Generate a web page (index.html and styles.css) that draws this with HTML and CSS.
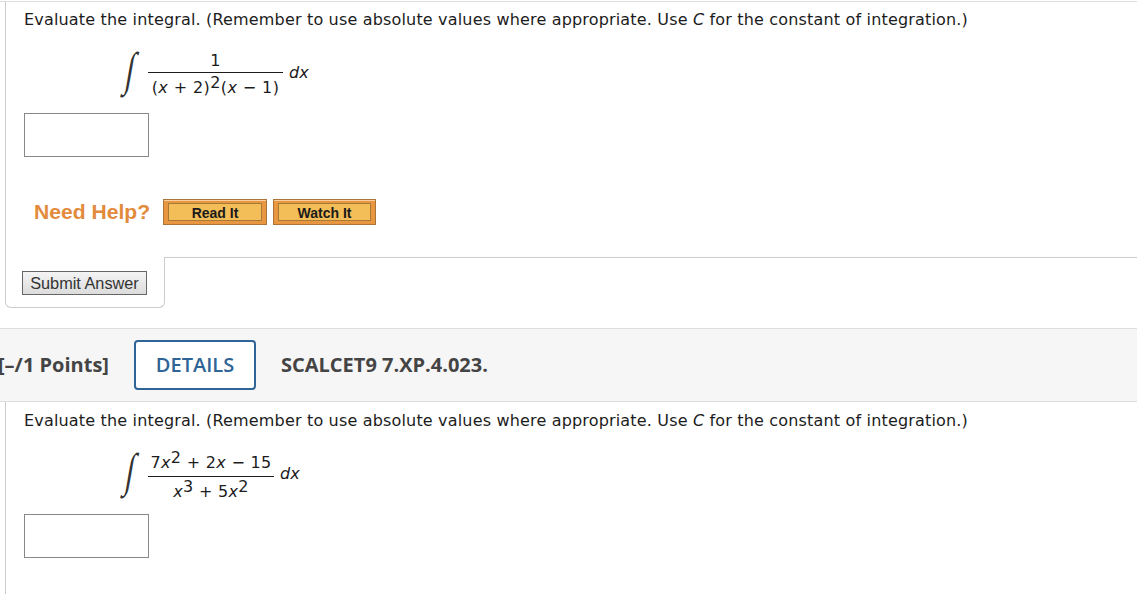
FILE: index.html
```html
<!DOCTYPE html>
<html lang="en">
<head>
<meta charset="utf-8">
<title>Integral questions</title>
<link rel="stylesheet" href="styles.css">
</head>
<body>
<section class="first">
  <div class="first-top">
    <p class="prompt">Evaluate the integral. (Remember to use absolute values where appropriate. Use <i>C</i> for the constant of integration.)</p>
    <div class="math">
      <span class="integral"><span class="integral-glyph">∫</span></span>
      <span class="frac frac-a">
        <span class="num">1</span>
        <span class="den">(<i>x</i> + 2)<sup>2</sup>(<i>x</i> − 1)</span>
      </span>
      <span class="dx"><i>dx</i></span>
    </div>
    <div class="answer"></div>
    <div class="help">
      <span class="need">Need Help?</span>
      <span class="hbtn read"><span class="hbtn-in">Read It</span></span>
      <span class="hbtn watch"><span class="hbtn-in">Watch It</span></span>
    </div>
  </div>
  <div class="submit-row">
    <div class="submit-box"><button class="submit" type="button">Submit Answer</button></div>
    <div class="submit-rest"></div>
  </div>
</section>
<header class="qhead">
  <span class="points">[–/1 Points]</span>
  <span class="details">DETAILS</span>
  <span class="code">SCALCET9 7.XP.4.023.</span>
</header>
<section class="second">
  <p class="prompt">Evaluate the integral. (Remember to use absolute values where appropriate. Use <i>C</i> for the constant of integration.)</p>
  <div class="math">
    <span class="integral"><span class="integral-glyph">∫</span></span>
    <span class="frac frac-b">
      <span class="num">7<i>x</i><sup>2</sup> + 2<i>x</i> − 15</span>
      <span class="den"><i>x</i><sup>3</sup> + 5<i>x</i><sup>2</sup></span>
    </span>
    <span class="dx"><i>dx</i></span>
  </div>
  <div class="answer"></div>
</section>
</body>
</html>
```
FILE: styles.css
```css
* { box-sizing: border-box; }
html, body { margin: 0; height: 594px; overflow: hidden; background: #fff; }
body {
  padding-top: 1px;
  font-family: "DejaVu Sans", Verdana, sans-serif;
  font-size: 16px;
  color: #1c1c1c;
}
.first { border-top: 1px solid #ddd; padding-left: 5px; }
.first-top { height: 255px; border-left: 1px solid #ccc; }
.second { height: 192px; margin-left: 5px; border-left: 1px solid #ccc; }

.prompt { margin: 0; padding-left: 18px; line-height: 20px; white-space: nowrap; letter-spacing: .17px; }
.first .prompt { padding-top: 8px; height: 28px; }
.second .prompt { padding-top: 9px; height: 30px; }

.math { display: flex; align-items: flex-start; height: 56px; padding-left: 113px; }
.first .math { margin-top: 18px; }
.second .math { margin-top: 17px; }
.integral { display: block; width: 29px; height: 56px; }
.integral-glyph {
  display: block;
  font-family: "Liberation Serif", serif;
  font-size: 46px;
  line-height: 56px;
  width: 29px;
  text-align: center;
  color: #333;
  transform: translate(-3px, -6px) scale(.66, 1.02) skewX(-15deg);
}
.frac { display: flex; flex-direction: column; letter-spacing: .4px; }
.frac sup { font-size: 16px; line-height: 0; vertical-align: 5px; }
.num { display: block; padding-top: 1px; border-bottom: 1px solid #1c1c1c; text-align: center; white-space: nowrap; }
.den { display: block; padding-top: 4px; line-height: 22px; white-space: nowrap; text-align: center; }
.frac-a { width: 135px; }
.frac-a .num { line-height: 23px; }
.frac-b { width: 126px; }
.frac-b .num { line-height: 26px; letter-spacing: .3px; }
.frac-b .den { letter-spacing: .3px; }
.dx { margin: 15px 0 0 6px; line-height: 20px; }

.answer { width: 125px; height: 44px; margin: 9px 0 0 18px; border: 1px solid #888; }

.help { display: flex; align-items: flex-start; margin-top: 42px; padding-left: 28px; }
.need {
  width: 129px;
  font-family: "Liberation Sans", Arial, sans-serif;
  font-weight: bold;
  font-size: 21.1px;
  line-height: 26px;
  color: #e28b3c;
}
.hbtn {
  display: block;
  height: 26px;
  padding: 3px 4px 3px;
  border: 1px solid #a8743a;
  background: #e8963f;
  box-shadow: inset 0 1px 0 #f7cf9f;
}
.read { width: 104px; margin-right: 6px; }
.watch { width: 103px; }
.hbtn-in {
  display: block;
  height: 18px;
  border: 1px solid #a87a3a;
  background: #f3bd58;
  font-family: "Liberation Sans", Arial, sans-serif;
  font-weight: bold;
  font-size: 14px;
  line-height: 18px;
  text-align: center;
  color: #1a1a1a;
}

.submit-row { display: flex; height: 51px; }
.submit-box {
  width: 160px;
  border: 1px solid #ccc;
  border-top: 0;
  border-radius: 0 0 6px 6px;
  padding: 14px 0 0 16px;
}
.submit-rest { flex: 1; border-top: 1px solid #ccc; }
.submit {
  display: block;
  width: 125px;
  height: 24px;
  padding: 0;
  border: 1px solid #666;
  border-radius: 0;
  background: linear-gradient(#f4f4f4, #dcdcdc);
  font-family: "Liberation Sans", Arial, sans-serif;
  font-size: 16.3px;
  line-height: 22px;
  color: #333;
}

.qhead {
  display: flex;
  align-items: center;
  height: 74px;
  margin-top: 20px;
  background: #f6f6f6;
  border-top: 1px solid #ddd;
  border-bottom: 1px solid #ddd;
  font-family: "Open Sans", "Noto Sans", sans-serif;
  font-size: 20px;
  color: #444;
}
.points { width: 136px; margin-left: -2px; padding-bottom: 2px; font-weight: bold; white-space: nowrap; }
.details {
  width: 122px;
  height: 50px;
  margin-right: 25px;
  border: 2px solid #2e6496;
  border-radius: 4px;
  background: #fff;
  color: #2e6496;
  font-weight: 600;
  line-height: 46px;
  text-align: center;
}
.code { padding-bottom: 2px; font-weight: bold; }
```
